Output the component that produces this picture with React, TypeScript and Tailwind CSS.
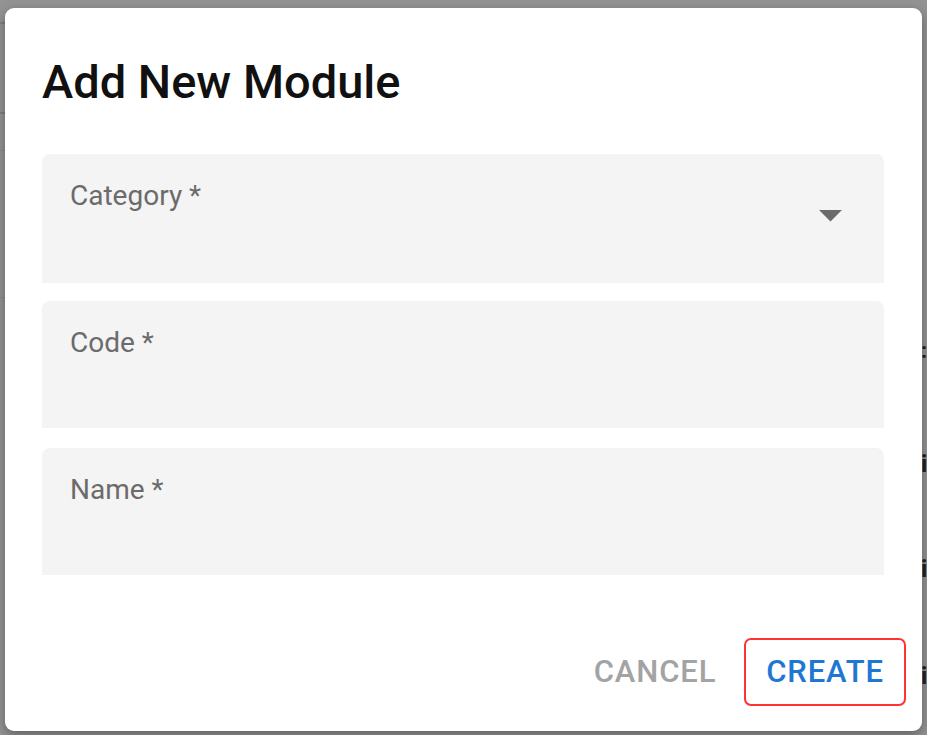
import React from "react";

const font = { fontFamily: "Roboto, 'Liberation Sans', sans-serif" };

function ArrowDropDown() {
  return (
    <svg viewBox="0 0 24 24" className="h-[55px] w-[55px] shrink-0 fill-[#6b6b6b]">
      <path d="M7 10l5 5 5-5z" />
    </svg>
  );
}

function Field({ label, select = false, height, className = "" }: { label: string; select?: boolean; height: string; className?: string }) {
  return (
    <div className={`flex justify-between rounded-t-[8px] bg-[#f4f4f4] ${height} ${className}`}>
      <span className="pl-[28px] pt-[28px] text-[28px] leading-none text-[#6b6b6b]">{label}</span>
      {select && (
        <span className="mr-[26px] mt-[33px]">
          <ArrowDropDown />
        </span>
      )}
    </div>
  );
}

export default function App() {
  return (
    <div className="relative h-[735px] w-[927px] overflow-hidden bg-[#939393]" style={font}>
      {/* page behind the overlay */}
      <div className="absolute left-0 top-[22px] h-[2px] w-[6px] bg-[#7e7e7e]" />
      <div className="absolute left-0 top-[112px] h-[2px] w-[6px] bg-[#7e7e7e]" />
      <div className="absolute left-0 top-[150px] h-px w-[6px] bg-[#888]" />
      <div className="absolute left-0 top-[297px] h-px w-[6px] bg-[#888]" />
      <span className="absolute left-[921px] top-[340px] text-[22px] font-bold leading-none text-[#222]">:</span>
      <span className="absolute left-[921px] top-[452px] text-[24px] font-bold leading-none text-[#222]">i</span>
      <span className="absolute left-[921px] top-[557px] text-[24px] font-bold leading-none text-[#222]">i</span>
      <span className="absolute left-[921px] top-[664px] text-[24px] font-bold leading-none text-[#222]">i</span>

      <div className="relative ml-[5px] mt-[8px] flex h-[723px] w-[917px] flex-col rounded-[9px] bg-white pl-[37px] pr-[38px] pt-[50px] shadow-[0_4px_12px_rgba(0,0,0,0.35)]">
        <h2 className="text-[47px] font-medium leading-none text-[#111]">Add New Module</h2>

        <Field label="Category *" select height="h-[129px]" className="mt-[49px]" />
        <Field label="Code *" height="h-[127px]" className="mt-[18px]" />
        <Field label="Name *" height="h-[127px]" className="mt-[20px]" />

        <div className="mt-auto mb-[25px] -mr-[22px] flex justify-end gap-[8px]">
          <button className="flex h-[68px] w-[162px] items-center justify-center rounded-[7px] border-2 border-transparent text-[31px] font-medium tracking-[0.02857em] text-[#a3a3a3]">
            CANCEL
          </button>
          <button className="flex h-[68px] w-[162px] items-center justify-center rounded-[7px] border-2 border-[#ff3333] text-[31px] font-medium tracking-[0.02857em] text-[#1f77d4]">
            CREATE
          </button>
        </div>
      </div>
    </div>
  );
}
